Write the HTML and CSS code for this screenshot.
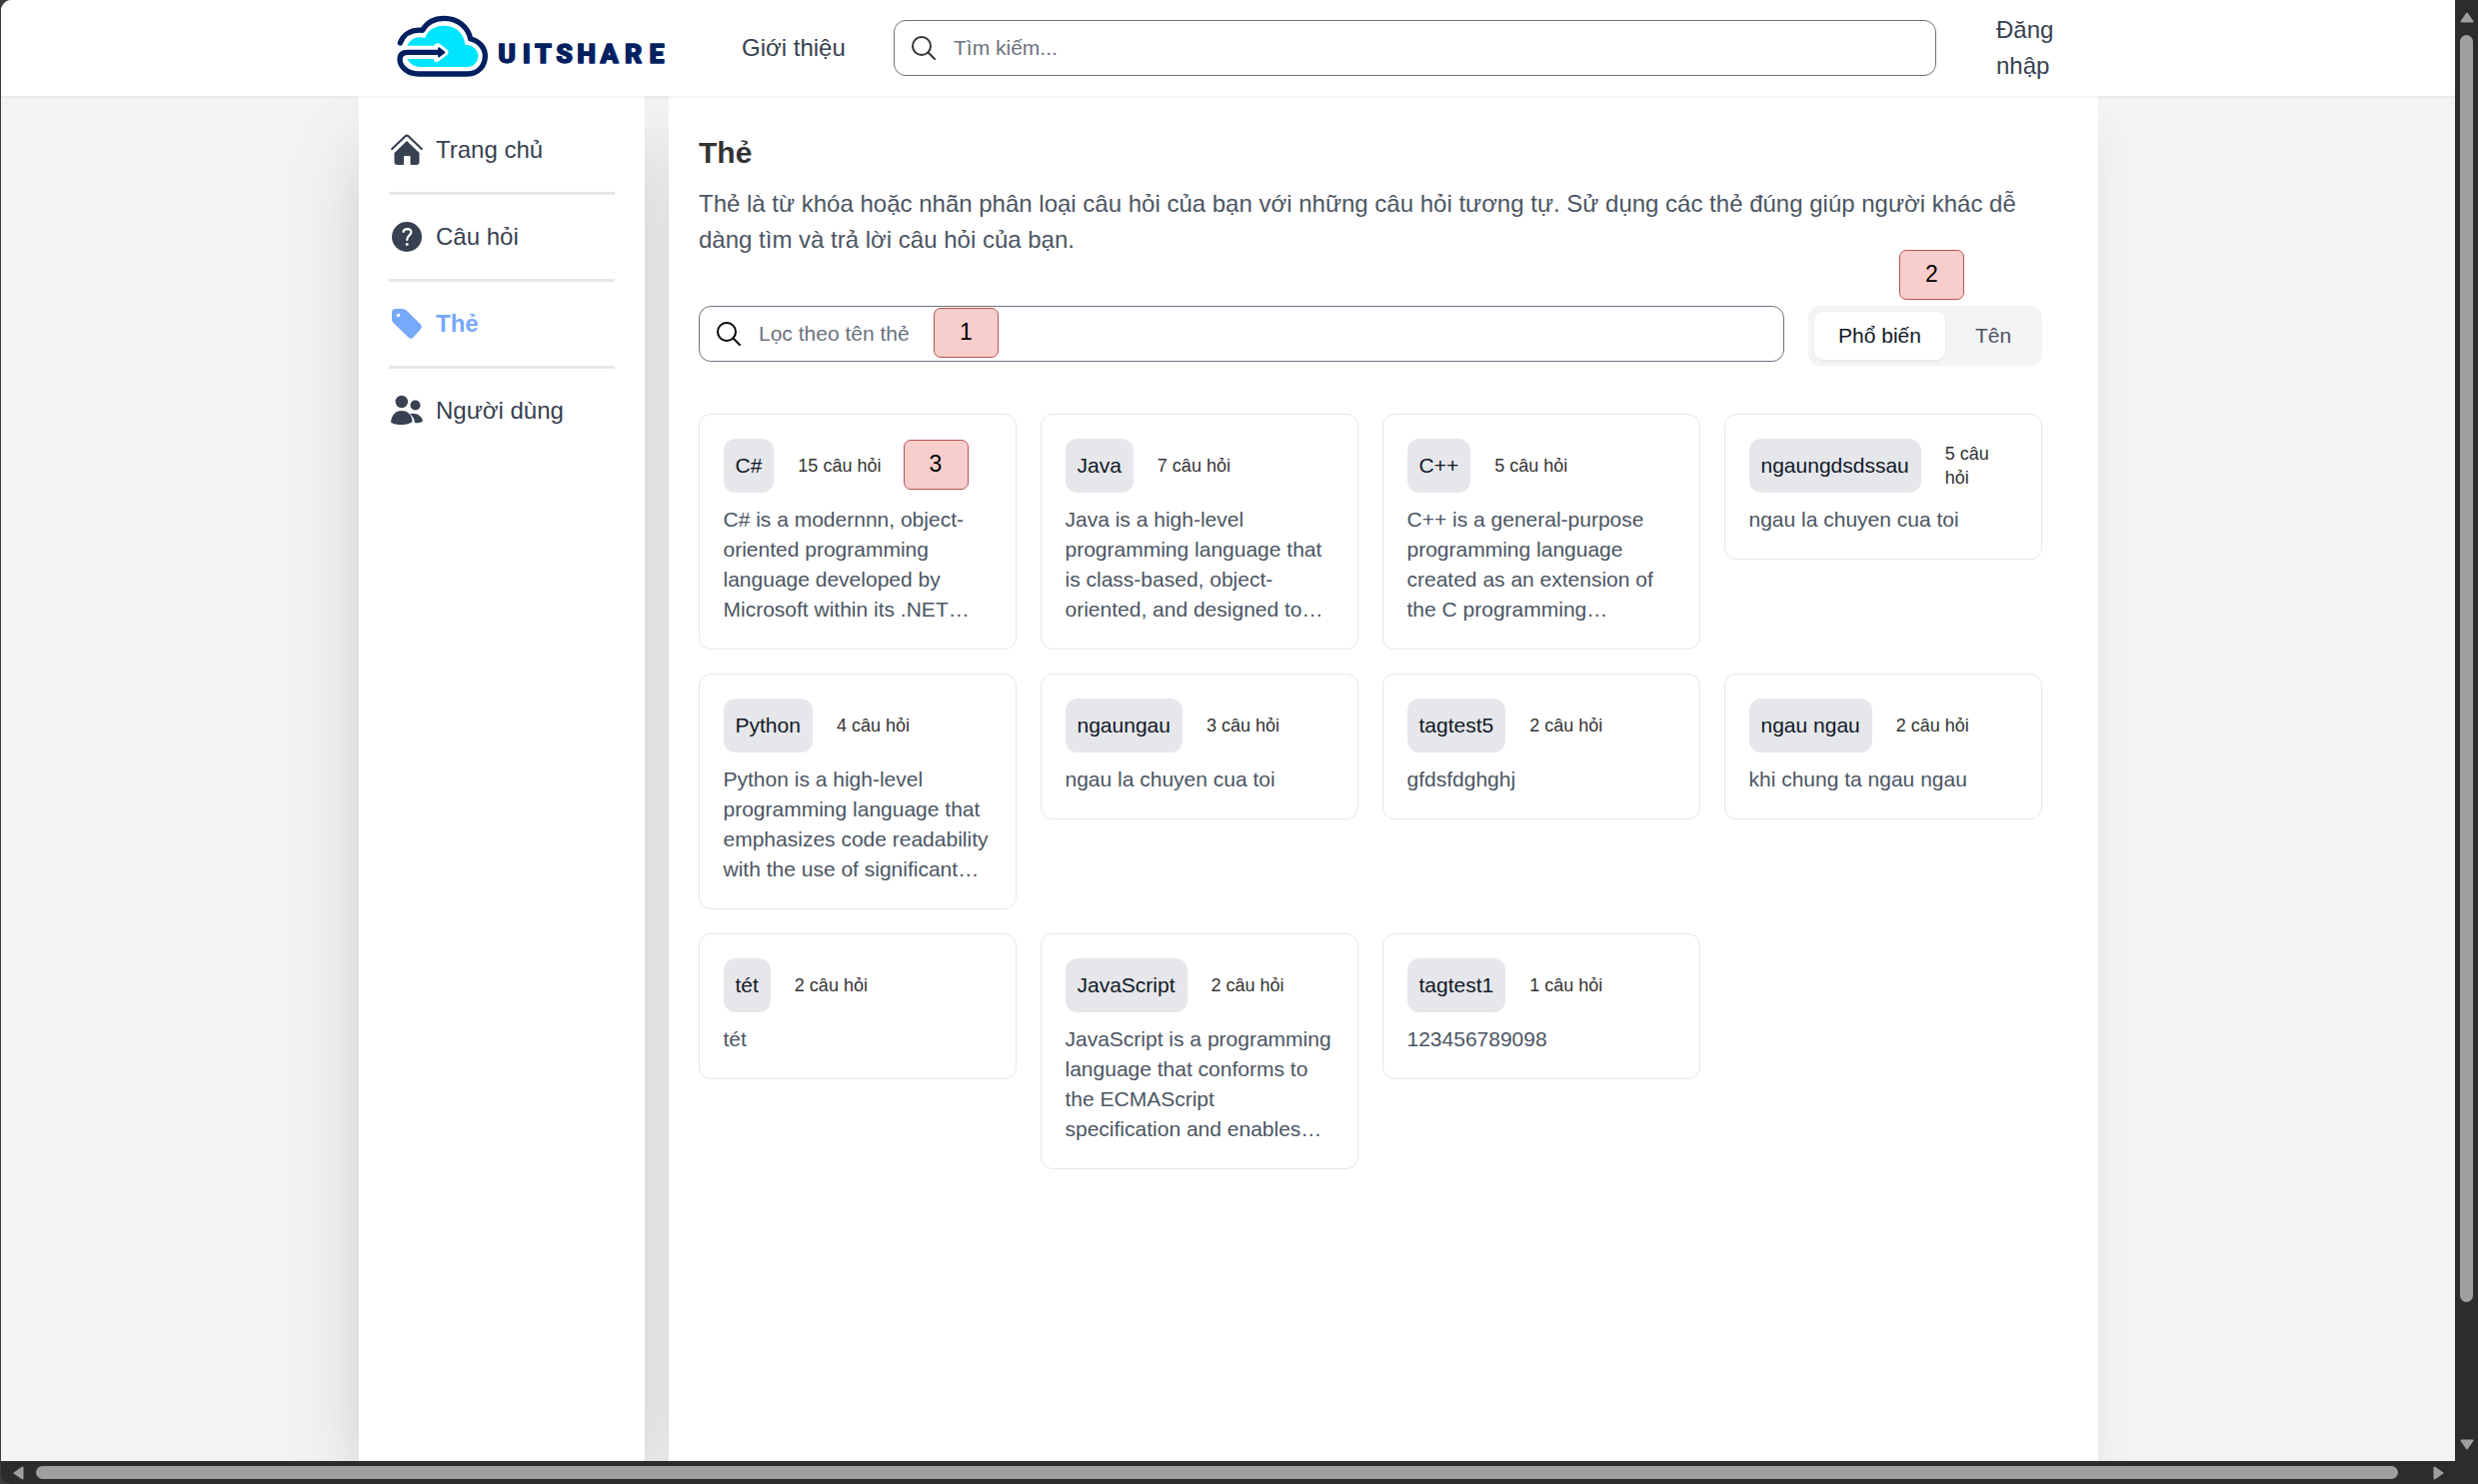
FILE: index.html
```html
<!DOCTYPE html>
<html lang="vi">
<head>
<meta charset="utf-8">
<title>UITShare - Thẻ</title>
<link rel="stylesheet" href="styles.css">
</head>
<body>
<div class="window">
  <div class="page">
    <header class="header">
      <svg class="logo" viewBox="0 0 840 216" role="img" aria-label="UITSHARE">
        <path fill="#00e5ff" d="M52 122C62 102 80 92 106 99C112 76 135 62 163 62C200 62 224 88 226 119C250 120 265 135 265 153C265 172 250 186 232 186H92C75 186 60 178 52 162H132V167Q138 174 148 168L174 148Q178 142 174 136L150 116Q138 112 132 122Z"/>
        <path class="logo-line" d="M31 114C40 90 62 73 98 76C112 50 135 40 163 40C203 40 235 65 242 102C268 108 286 128 286 153C286 184 263 207 233 207H86C55 207 30 187 30 163C30 148 40 142 55 142H150"/>
        <path class="logo-head" d="M147 130L163 142L147 154Z"/>
        <text class="logo-text" x="351 410 460 524 590 659 731 801" y="175">UITSHARE</text>
      </svg>
      <a class="nav-link">Giới thiệu</a>
      <div class="search search-top">
        <svg class="search-icon" viewBox="0 0 24 24"><circle cx="10" cy="10" r="9"/><path d="M16.500 16.500L23 23"/></svg>
        <span>Tìm kiếm...</span>
      </div>
      <a class="login">Đăng nhập</a>
    </header>
    <div class="body">
      <nav class="sidebar">
        <a class="side-item">
          <svg class="side-icon" viewBox="0 0 36 36"><path class="roof" d="M3.200 17L16.500 4.300Q18 3 19.500 4.300L32.800 17"/><path d="M18 9L30.500 21V30Q30.500 33 27.500 33H22.500Q21.500 33 21.500 32V25Q21.500 24 20.500 24H16Q15 24 15 25V32Q15 33 14 33H8.500Q5.500 33 5.500 30V21Z"/></svg>
          <span>Trang chủ</span>
        </a>
        <a class="side-item">
          <svg class="side-icon" viewBox="0 0 36 36"><circle cx="18" cy="18" r="15"/><path class="mark" d="M14.500 13Q15 10.200 18.500 10.200Q22.500 10.400 22.300 13.500C22.200 16.500 18.300 16.500 18.200 21"/><circle cx="18.200" cy="25.500" r="1.500" fill="#fff"/></svg>
          <span>Câu hỏi</span>
        </a>
        <a class="side-item active">
          <svg class="side-icon" viewBox="0 0 36 36"><path d="M3 7Q3 3 7 3H14Q16 3 17.500 4.500L31.700 18.500Q34 21 31.700 23.500L24.500 31.500Q22 34 19.500 31.500L4.500 17Q3 15.500 3 13.500Z"/><circle cx="9.500" cy="9.500" r="1.700" fill="#fff"/></svg>
          <span>Thẻ</span>
        </a>
        <a class="side-item">
          <svg class="side-icon" viewBox="0 0 36 36"><circle cx="12.800" cy="9" r="6.200"/><circle cx="26.500" cy="12.500" r="5"/><path d="M2 29C3 21 8 18 12.800 18S23 21 23.500 28.500C22 33 3 33 2 29Z"/><path d="M21 21.200C27 19.500 33 22.500 34 28.500Q31 30.800 26 30Q25.500 24.500 21 21.200Z"/></svg>
          <span>Người dùng</span>
        </a>
      </nav>
      <main class="content">
        <h1>Thẻ</h1>
        <p class="intro">Thẻ là từ khóa hoặc nhãn phân loại câu hỏi của bạn với những câu hỏi tương tự. Sử dụng các thẻ đúng giúp người khác dễ dàng tìm và trả lời câu hỏi của bạn.</p>
        <div class="toolbar">
          <div class="search search-filter">
            <svg class="search-icon" viewBox="0 0 24 24"><circle cx="10" cy="10" r="9"/><path d="M16.500 16.500L23 23"/></svg>
            <span>Lọc theo tên thẻ</span>
            <b class="note note-1">1</b>
          </div>
          <div class="tabs">
            <span class="tab selected">Phổ biến</span>
            <span class="tab">Tên</span>
            <b class="note note-2">2</b>
          </div>
        </div>
        <section class="cards">
          <article class="card">
            <div class="card-head"><span class="tag">C#</span><span class="count">15 câu hỏi</span><b class="note note-3">3</b></div>
            <p>C# is a modernnn, object-<br>oriented programming<br>language developed by<br>Microsoft within its .NET…</p>
          </article>
          <article class="card">
            <div class="card-head"><span class="tag">Java</span><span class="count">7 câu hỏi</span></div>
            <p>Java is a high-level<br>programming language that<br>is class-based, object-<br>oriented, and designed to…</p>
          </article>
          <article class="card">
            <div class="card-head"><span class="tag">C++</span><span class="count">5 câu hỏi</span></div>
            <p>C++ is a general-purpose<br>programming language<br>created as an extension of<br>the C programming…</p>
          </article>
          <article class="card">
            <div class="card-head"><span class="tag">ngaungdsdssau</span><span class="count">5 câu<br>hỏi</span></div>
            <p>ngau la chuyen cua toi</p>
          </article>
          <article class="card">
            <div class="card-head"><span class="tag">Python</span><span class="count">4 câu hỏi</span></div>
            <p>Python is a high-level<br>programming language that<br>emphasizes code readability<br>with the use of significant…</p>
          </article>
          <article class="card">
            <div class="card-head"><span class="tag">ngaungau</span><span class="count">3 câu hỏi</span></div>
            <p>ngau la chuyen cua toi</p>
          </article>
          <article class="card">
            <div class="card-head"><span class="tag">tagtest5</span><span class="count">2 câu hỏi</span></div>
            <p>gfdsfdghghj</p>
          </article>
          <article class="card">
            <div class="card-head"><span class="tag">ngau ngau</span><span class="count">2 câu hỏi</span></div>
            <p>khi chung ta ngau ngau</p>
          </article>
          <article class="card">
            <div class="card-head"><span class="tag">tét</span><span class="count">2 câu hỏi</span></div>
            <p>tét</p>
          </article>
          <article class="card">
            <div class="card-head"><span class="tag">JavaScript</span><span class="count">2 câu hỏi</span></div>
            <p>JavaScript is a programming<br>language that conforms to<br>the ECMAScript<br>specification and enables…</p>
          </article>
          <article class="card">
            <div class="card-head"><span class="tag">tagtest1</span><span class="count">1 câu hỏi</span></div>
            <p>123456789098</p>
          </article>
        </section>
      </main>
    </div>
  </div>
  <div class="vbar">
    <svg class="arrow-v" viewBox="0 0 14 11"><path d="M7 1.500L12.500 9.500H1.500Z"/></svg>
    <div class="thumb-v"></div>
    <svg class="arrow-v" viewBox="0 0 14 11"><path d="M7 9.500L12.500 1.500H1.500Z"/></svg>
  </div>
  <div class="hbar">
    <svg class="arrow-h" viewBox="0 0 11 14"><path d="M1.500 7L9.500 1.500V12.500Z"/></svg>
    <div class="thumb-h"></div>
    <svg class="arrow-h" viewBox="0 0 11 14"><path d="M9.500 7L1.500 1.500V12.500Z"/></svg>
  </div>
</div>
</body>
</html>
```
FILE: styles.css
```css
* { box-sizing: border-box; }
body, h1, p { margin: 0; }
body {
  width: 2479px;
  height: 1485px;
  overflow: hidden;
  background: #3c3c3c;
  font-family: "Liberation Sans", Arial, sans-serif;
  font-size: 24px;
  line-height: 36px;
  color: #374151;
}
.window {
  display: grid;
  grid-template-columns: 2455px 23px;
  grid-template-rows: 1462px 23px;
  padding-left: 1px;
}
.page {
  display: flex;
  flex-direction: column;
  overflow: hidden;
  border-top-left-radius: 11px;
  background: #f3f3f3;
}
.header {
  position: relative;
  z-index: 1;
  flex: none;
  display: flex;
  align-items: center;
  height: 96px;
  padding-left: 389px;
  background: #fff;
  box-shadow: 0 1.5px 3px rgba(0, 0, 0, .05);
}
.logo { flex: none; width: 280px; height: 72px; margin-top: -14px; }
.logo-line { fill: none; stroke: #002060; stroke-width: 16; stroke-linecap: round; stroke-linejoin: round; }
.logo-head { fill: #002060; stroke: #002060; stroke-width: 6; stroke-linejoin: round; }
.logo-text {
  font: 900 80px Roboto, sans-serif;
  text-anchor: middle;
  fill: #002060;
  stroke: #002060;
  stroke-width: 4;
  stroke-linejoin: round;
}
.nav-link { width: 152px; margin-left: 72px; white-space: nowrap; }
.search {
  position: relative;
  display: flex;
  align-items: center;
  height: 56px;
  padding-left: 17px;
  gap: 18px;
  border: 1px solid #6b7280;
  border-radius: 12px;
  background: #fff;
  color: #6b7280;
  font-size: 21px;
  line-height: 30px;
}
.search-top { width: 1043px; }
.search-top .search-icon { stroke: #333; }
.search-icon { width: 24px; height: 24px; fill: none; stroke: #000; stroke-width: 2; stroke-linecap: round; }
.login { width: 66px; margin-left: 60px; }
.body { display: flex; flex: 1; gap: 24px; padding-left: 358px; }
.sidebar {
  width: 286px;
  padding: 12px 30px;
  background: #fff;
  box-shadow: 0 37.5px 75px -18px rgba(0, 0, 0, .25);
}
.side-item {
  display: flex;
  align-items: center;
  gap: 11px;
  height: 87px;
  border-bottom: 3px solid #e5e7eb;
}
.side-item:last-child { border-bottom-color: transparent; }
.side-icon { width: 36px; height: 36px; fill: #374151; }
.roof { fill: none; stroke: #374151; stroke-width: 2.2; stroke-linecap: round; }
.mark { fill: none; stroke: #fff; stroke-width: 2.2; stroke-linecap: round; }
.active { color: #76a9fa; font-weight: 700; }
.active .side-icon { fill: #76a9fa; }
.content {
  width: 1430px;
  padding: 36px 56px 0 30px;
  background: #fff;
  box-shadow: 0 30px 37.5px -7.5px rgba(0, 0, 0, .1);
}
h1 { font-size: 30px; line-height: 42px; color: #333; }
.intro { margin-top: 12px; color: #4b5563; }
.toolbar { display: flex; gap: 24px; margin-top: 48px; height: 60px; }
.search-filter { width: 1086px; }
.tabs {
  position: relative;
  display: flex;
  flex: 1;
  gap: 6px;
  padding: 6px;
  border-radius: 12px;
  background: #f3f4f6;
  font-size: 21px;
  color: #4b5563;
}
.tab { padding: 0 24px; line-height: 48px; border-radius: 9px; white-space: nowrap; }
.selected { background: #fff; color: #111827; box-shadow: 0 1.5px 3px rgba(0, 0, 0, .05); }
.cards {
  display: grid;
  grid-template-columns: repeat(4, 1fr);
  align-items: start;
  gap: 24px;
  margin-top: 48px;
}
.card {
  padding: 24px 23.5px;
  border: 1px solid #e5e7eb;
  border-radius: 12px;
  font-size: 21px;
  line-height: 30px;
  color: #4b5563;
}
.card p { margin-top: 12px; white-space: nowrap; }
.card-head { position: relative; display: flex; align-items: center; gap: 24px; height: 54px; }
.tag { padding: 12px; border-radius: 12px; background: #e5e7eb; color: #111827; white-space: nowrap; }
.count { font-size: 18px; line-height: 24px; color: #333; white-space: nowrap; }
.note {
  position: absolute;
  width: 65px;
  height: 50px;
  border: 1px solid #b85450;
  border-radius: 7px;
  background: #f8cecc;
  color: #000;
  font-size: 23px;
  font-weight: 400;
  line-height: 47px;
  text-align: center;
}
.note-1 { left: 234px; top: 1px; }
.note-2 { left: 91px; top: -56px; }
.note-3 { left: 180px; top: 1px; }
.vbar, .hbar { display: flex; align-items: center; background: #2c2c2c; }
.vbar { flex-direction: column; padding: 12px 0 11px; }
.hbar { grid-column: 1 / 3; padding: 0 34px 0 12px; border-bottom-left-radius: 10px; }
.arrow-v, .arrow-h { flex: none; fill: #9f9f9f; stroke: #9f9f9f; stroke-width: 2; stroke-linejoin: round; }
.arrow-v { width: 14px; height: 11px; }
.arrow-h { width: 11px; height: 14px; }
.thumb-v { width: 13px; height: 1268px; margin: 12px 0 auto; border-radius: 7px; background: #9f9f9f; }
.thumb-h { width: 2363px; height: 13px; margin: 0 auto 0 12px; border-radius: 7px; background: #9f9f9f; }
```
